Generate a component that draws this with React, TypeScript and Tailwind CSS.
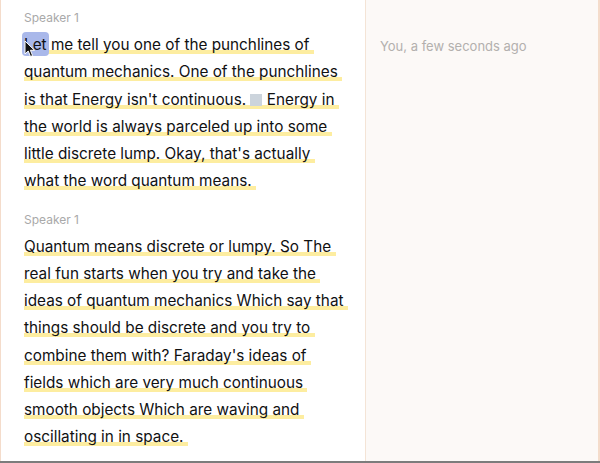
import React from "react";

const hl =
  "[box-decoration-break:clone] [-webkit-box-decoration-break:clone] bg-[linear-gradient(to_bottom,transparent_78%,#fdeda0_78%)]";

export default function App() {
  return (
    <div
      className="w-[600px] h-[463px] flex flex-col bg-white overflow-hidden"
      style={{ fontFamily: "Inter, 'Noto Sans', sans-serif" }}
    >
      <div className="flex flex-1 min-h-0">
        <div className="w-[365px] shrink-0 border-l border-[#f4dccb] pl-[23px] pr-[18px] pt-[10px] bg-white relative">
          <div className="text-[12px] leading-[16px] text-[#a9a9a9] mb-[5px]">Speaker 1</div>
          <p className="text-[15.3px] leading-[27.25px] text-[#111] mb-[17px] whitespace-pre-wrap">
            <span className={hl}>
              <span className="relative">
                <span className="absolute left-[-2px] right-[-2px] top-[-3px] bottom-[-2px] rounded-[4px] bg-[#a9b8ea]"></span>
                <span className="relative">Let</span>
              </span>{" "}
              me tell you one of the punchlines of quantum mechanics. One of the punchlines is
              that Energy isn't continuous.{" "}
              <span className="inline-block w-[12px] h-[12px] bg-[#ccd4dc] align-[-1px]"></span>{" "}
              Energy in the world is always parceled up into some little discrete lump. Okay,
              that's actually what the word quantum means.{" "}
            </span>
          </p>
          <div className="text-[12px] leading-[16px] text-[#a9a9a9] mb-[5px]">Speaker 1</div>
          <p className="text-[15.3px] leading-[27.25px] text-[#111] whitespace-pre-wrap">
            <span className={hl}>
              Quantum means discrete or lumpy. So The real fun starts when you try and take the
              ideas of quantum mechanics Which say that things should be discrete and you try to
              combine them with? Faraday's ideas of fields which are very much continuous smooth
              objects Which are waving and oscillating in in space.{" "}
            </span>
          </p>
          <svg
            className="absolute left-[23px] top-[40px]"
            width="12"
            height="18"
            viewBox="0 0 12 18"
          >
            <path
              d="M1 1 L1 14 L4.2 11 L6.5 16.5 L8.6 15.6 L6.4 10.3 L10.5 10.3 Z"
              fill="#111"
              stroke="#fff"
              strokeWidth="1"
              strokeLinejoin="round"
            />
          </svg>
        </div>
        <div className="flex-1 bg-[#fcf9f7] border-l border-[#f4e4d6] border-r-2 border-r-[#f4dccb] pl-[14px] pt-[37px]">
          <div className="text-[13px] leading-[18px] text-[#b3b0ae]">You, a few seconds ago</div>
        </div>
      </div>
      <div className="h-[2px] bg-[#7c7c7c] shrink-0"></div>
    </div>
  );
}
